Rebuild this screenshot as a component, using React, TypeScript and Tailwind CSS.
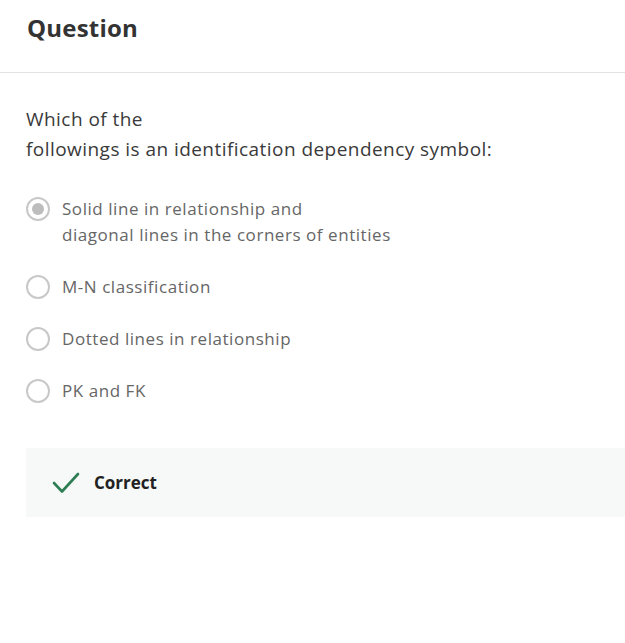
import React from 'react';

const options = [
  { label: ['Solid line in relationship and', 'diagonal lines in the corners of entities'], selected: true },
  { label: ['M-N classification'], selected: false },
  { label: ['Dotted lines in relationship'], selected: false },
  { label: ['PK and FK'], selected: false },
];

function Radio({ selected }: { selected: boolean }) {
  return (
    <span className="mt-[1px] flex h-6 w-6 shrink-0 items-center justify-center rounded-full border-2 border-[#c8c8c8] bg-white">
      {selected && <span className="h-[12px] w-[12px] rounded-full bg-[#bdbdbd]" />}
    </span>
  );
}

export default function App() {
  return (
    <div className="min-h-screen overflow-hidden bg-white font-['Open_Sans',sans-serif]">
      {/* Header */}
      <div className="border-b border-[#e3e3e3] px-[27px] pt-[9px] pb-[25px]">
        <h1 className="text-[24px] font-bold leading-[38px] tracking-[0.2px] text-[#333333]">Question</h1>
      </div>

      <div className="pl-[26px] pt-[31px]">
        <p className="text-[19px] leading-[30px] tracking-[0.45px] text-[#3a3a3a]">
          Which of the
          <br />
          followings is an identification dependency symbol:
        </p>

        <div className="mt-[32px] flex flex-col gap-[26px]">
          {options.map((opt, idx) => (
            <label key={idx} className="flex items-start gap-[12px]">
              <Radio selected={opt.selected} />
              <span className="text-[17px] leading-[26px] tracking-[0.55px] text-[#666666]">
                {opt.label.map((line, i) => (
                  <span key={i} className="block">
                    {line}
                  </span>
                ))}
              </span>
            </label>
          ))}
        </div>

        {/* Feedback */}
        <div className="mt-[44px] flex h-[69px] items-center gap-[14px] bg-[#f6f9f8] pl-[26px]">
          <svg width="28" height="22" viewBox="0 0 28 22" fill="none">
            <path d="M2 11 L10 19.5 L26 2" stroke="#2f7d55" strokeWidth="2.6" strokeLinecap="round" strokeLinejoin="round" />
          </svg>
          <span className="text-[17px] font-bold text-[#222222]">Correct</span>
        </div>
      </div>
    </div>
  );
}
